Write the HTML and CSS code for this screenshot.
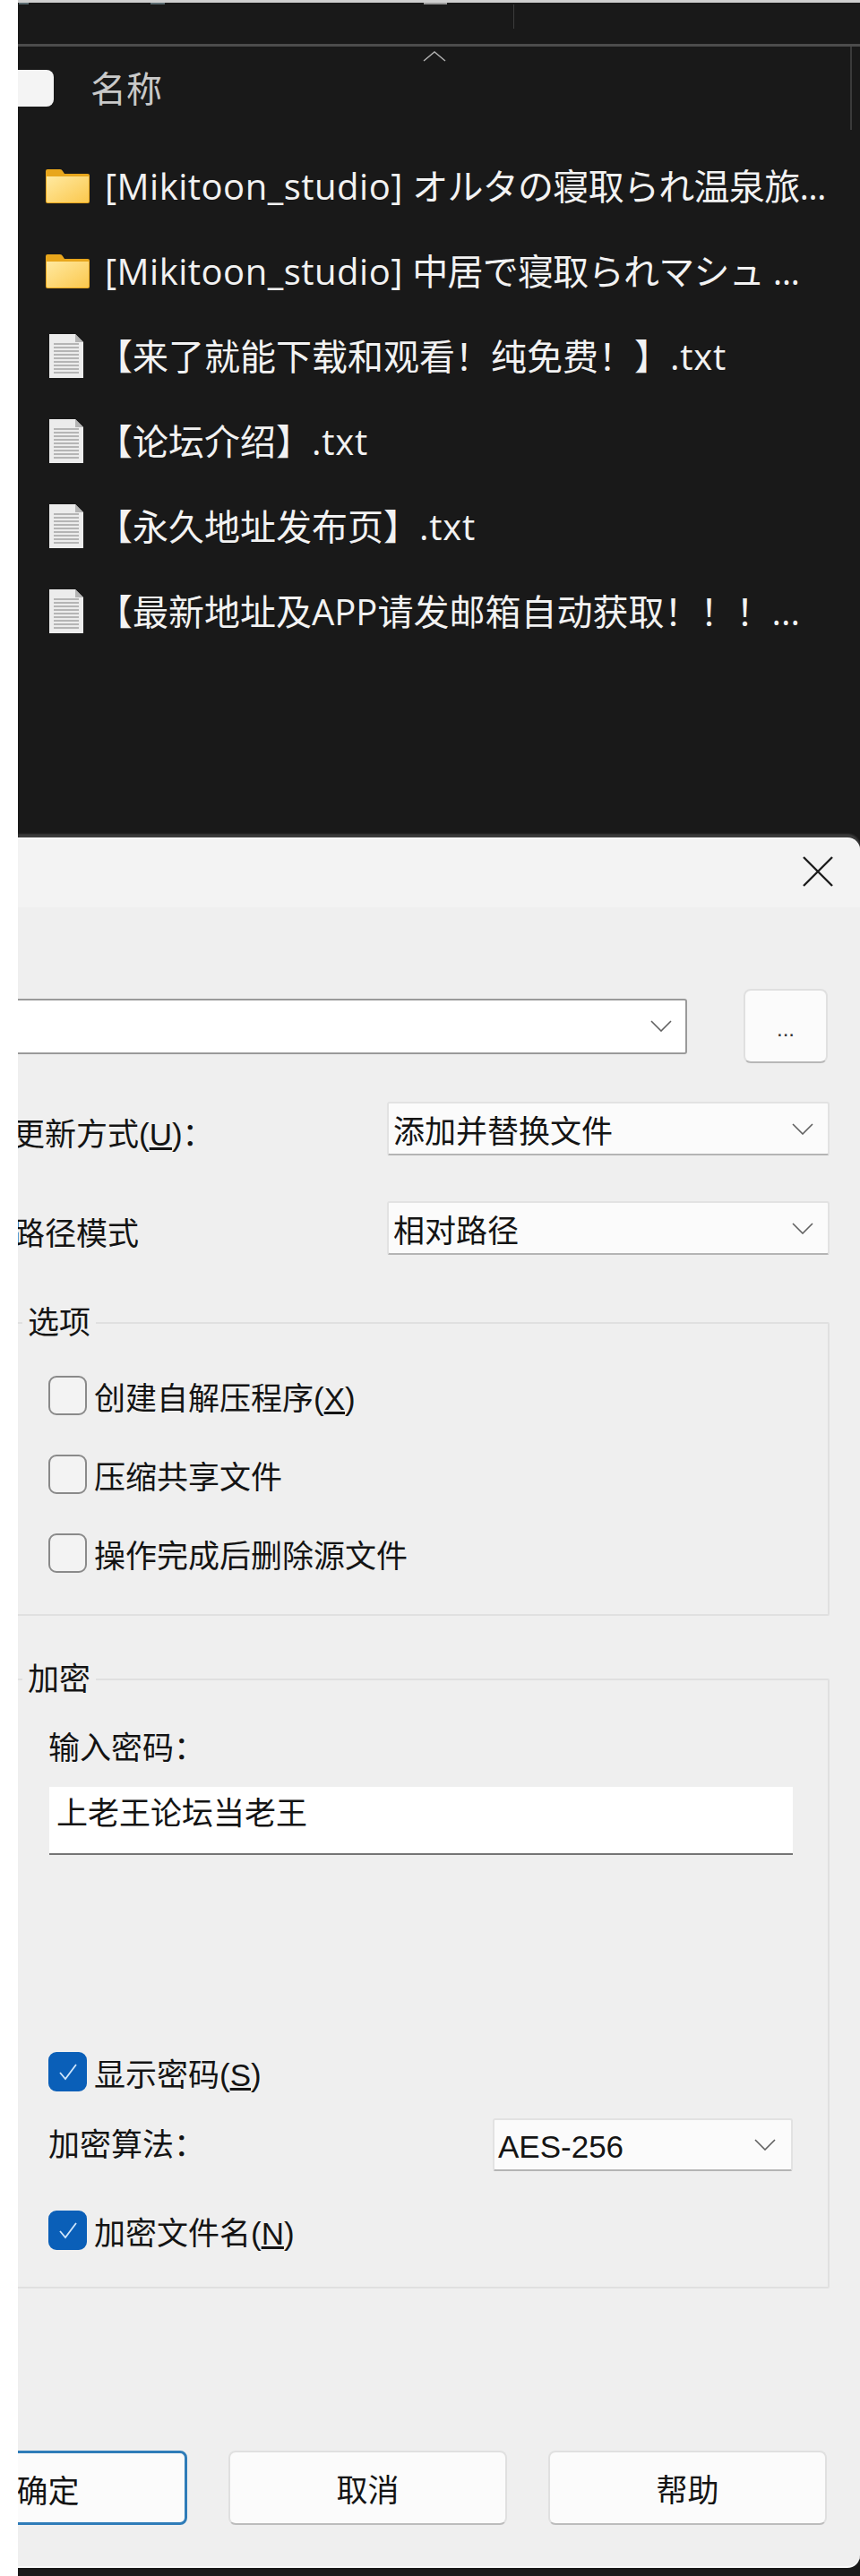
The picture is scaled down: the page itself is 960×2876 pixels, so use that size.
FILE: index.html
```html
<!DOCTYPE html>
<html lang="zh-CN">
<head>
    <meta charset="UTF-8">
    <title>压缩文件名和参数</title>
    <link rel="stylesheet" href="styles.css">
</head>
<body>
    <div class="screen">
        <!-- file explorer behind the dialog -->
        <div class="explorer">
            <div class="top-marks">
                <span class="mark mark-a"></span>
                <span class="mark mark-b"></span>
                <span class="mark mark-c"></span>
            </div>
            <div class="toolbar">
                <span class="toolbar-sep"></span>
            </div>
            <div class="list-head">
                <span class="head-check"></span>
                <span class="head-name">名称</span>
                <svg class="sort-arrow" width="26" height="12" viewBox="0 0 26 12"><polyline points="1,11 13,1 25,11"/></svg>
            </div>
            <div class="file-list">
                <div class="file-row">
                    <svg class="icon-folder" width="49" height="38" viewBox="0 0 49 38"><use href="#folder"/></svg>
                    <span class="file-name"><span class="latin">[Mikitoon_studio]</span> <span class="jp">オルタの寝取られ温泉旅...</span></span>
                </div>
                <div class="file-row">
                    <svg class="icon-folder" width="49" height="38" viewBox="0 0 49 38"><use href="#folder"/></svg>
                    <span class="file-name"><span class="latin">[Mikitoon_studio]</span> <span class="jp">中居で寝取られマシュ ...</span></span>
                </div>
                <div class="file-row">
                    <svg class="icon-doc" width="38" height="49" viewBox="0 0 38 49"><use href="#doc"/></svg>
                    <span class="file-name">【来了就能下载和观看！纯免费！】<span class="ext">.txt</span></span>
                </div>
                <div class="file-row">
                    <svg class="icon-doc" width="38" height="49" viewBox="0 0 38 49"><use href="#doc"/></svg>
                    <span class="file-name">【论坛介绍】<span class="ext">.txt</span></span>
                </div>
                <div class="file-row">
                    <svg class="icon-doc" width="38" height="49" viewBox="0 0 38 49"><use href="#doc"/></svg>
                    <span class="file-name">【永久地址发布页】<span class="ext">.txt</span></span>
                </div>
                <div class="file-row">
                    <svg class="icon-doc" width="38" height="49" viewBox="0 0 38 49"><use href="#doc"/></svg>
                    <span class="file-name">【最新地址及APP请发邮箱自动获取！！！...</span>
                </div>
            </div>
        </div>

        <!-- archive dialog -->
        <div class="dialog">
            <div class="titlebar">
                <svg width="36" height="36" viewBox="0 0 36 36"><path class="close-x" d="M2 2 L34 34 M34 2 L2 34"/></svg>
            </div>
            <div class="dialog-body">
                <div class="path-row">
                    <div class="combo">
                        <svg class="chev" width="24" height="13" viewBox="0 0 24 13"><polyline points="1,1 12,12 23,1"/></svg>
                    </div>
                    <div class="browse"><span class="browse-dots">...</span></div>
                </div>

                <div class="form-row first">
                    <span class="label label-cut">更新方式(<u>U</u>)：</span>
                    <div class="select select-wide">
                        <span>添加并替换文件</span>
                        <svg class="chev" width="24" height="13" viewBox="0 0 24 13"><polyline points="1,1 12,12 23,1"/></svg>
                    </div>
                </div>
                <div class="form-row second">
                    <span class="label label-cut">路径模式</span>
                    <div class="select select-wide">
                        <span>相对路径</span>
                        <svg class="chev" width="24" height="13" viewBox="0 0 24 13"><polyline points="1,1 12,12 23,1"/></svg>
                    </div>
                </div>

                <fieldset class="group group-options">
                    <legend>选项</legend>
                    <div class="check"><span class="box"></span><span>创建自解压程序(<u>X</u>)</span></div>
                    <div class="check"><span class="box"></span><span>压缩共享文件</span></div>
                    <div class="check"><span class="box"></span><span>操作完成后删除源文件</span></div>
                </fieldset>

                <fieldset class="group group-crypt">
                    <legend>加密</legend>
                    <div class="pw-label">输入密码：</div>
                    <div class="pw-input">上老王论坛当老王</div>
                    <div class="check show-pw">
                        <span class="box on"><svg width="22" height="20" viewBox="0 0 22 20"><polyline points="2,11 8,18 20,2"/></svg></span>
                        <span>显示密码(<u>S</u>)</span>
                    </div>
                    <div class="algo-row">
                        <span class="label">加密算法：</span>
                        <div class="select select-algo">
                            <span>AES-256</span>
                            <svg class="chev" width="24" height="13" viewBox="0 0 24 13"><polyline points="1,1 12,12 23,1"/></svg>
                        </div>
                    </div>
                    <div class="check enc-names">
                        <span class="box on"><svg width="22" height="20" viewBox="0 0 22 20"><polyline points="2,11 8,18 20,2"/></svg></span>
                        <span>加密文件名(<u>N</u>)</span>
                    </div>
                </fieldset>

                <div class="buttons">
                    <div class="btn btn-ok">确定</div>
                    <div class="btn">取消</div>
                    <div class="btn">帮助</div>
                </div>
            </div>
        </div>
    </div>

    <!-- shared icon shapes -->
    <svg class="defs" width="0" height="0">
        <defs>
            <linearGradient id="folderFill" x1="0" y1="0" x2="1" y2="1">
                <stop offset="0" stop-color="#ffe9a0"/>
                <stop offset="1" stop-color="#fbc84e"/>
            </linearGradient>
            <g id="folder">
                <path d="M2 0 H16 Q18 0 19 2 L21 5 H47 Q49 5 49 7 V36 Q49 38 47 38 H2 Q0 38 0 36 V2 Q0 0 2 0 Z" fill="#e8a61c"/>
                <path d="M1 8 H48 V36 Q48 37 47 37 H2 Q1 37 1 36 Z" fill="url(#folderFill)"/>
            </g>
            <g id="doc">
                <path d="M0 0 H29 L38 9 V49 H0 Z" fill="#ececec"/>
                <path d="M29 0 L38 9 H29 Z" fill="#b4b4b4"/>
                <path d="M5 11 H33 M5 15 H33 M5 19 H33 M5 23 H33 M5 27 H33 M5 31 H33 M5 35 H33 M5 39 H33 M5 43 H33" stroke="#a2a2a2" stroke-width="1.6"/>
            </g>
        </defs>
    </svg>
</body>
</html>
```

FILE: styles.css
```css
/* reset */
*{
    margin: 0;
    padding: 0;
    box-sizing: border-box;
}
html,body{
    height: 100%;
}
body{
    background-color: #fff;
    font-family: "Liberation Sans", "Noto Sans CJK SC", sans-serif;
    font-size: 35px;
    color: #141414;
}
.defs{
    position: absolute;
}
.screen{
    margin-left: 20px;
    height: 2876px;
    overflow: hidden;
    background-color: #191919;
    border-top: 3px solid #cfcfcf;
}

/* explorer */
.explorer{
    height: 932px;
    color: #f2f2f2;
    font-family: "Open Sans", "Noto Sans CJK SC", sans-serif;
}
.top-marks{
    display: flex;
    height: 2px;
}
.mark{
    display: block;
    height: 2px;
    background-color: #5a6a70;
}
.mark-a{
    width: 11px;
    margin-left: 1px;
}
.mark-b{
    width: 16px;
    margin-left: 136px;
}
.mark-c{
    width: 26px;
    margin-left: 289px;
    background-color: #9a9a9a;
}
.toolbar{
    height: 47px;
    border-bottom: 3px solid #4c4c4c;
    padding-left: 553px;
}
.toolbar-sep{
    display: block;
    width: 1px;
    height: 27px;
    background-color: #3c3c3c;
}
.list-head{
    position: relative;
    width: 931px;
    height: 93px;
    display: flex;
    align-items: center;
    border-right: 2px solid #3a3a3a;
}
.head-check{
    width: 40px;
    height: 41px;
    background-color: #f4f4f4;
    border-radius: 0 8px 8px 0;
}
.head-name{
    margin-left: 41px;
    font-size: 40px;
    line-height: 48px;
    color: #c9c9c9;
}
.sort-arrow{
    position: absolute;
    left: 452px;
    top: 5px;
}
.sort-arrow polyline{
    fill: none;
    stroke: #b0b0b0;
    stroke-width: 1.5;
}
.file-list{
    margin-top: 15px;
}
.file-row{
    height: 95px;
    display: flex;
    align-items: center;
    padding-left: 31px;
}
.icon-doc{
    margin-left: 4px;
    margin-right: -2px;
}
.file-name{
    margin-left: 17px;
    font-size: 40px;
    line-height: 50px;
    white-space: nowrap;
}
.latin{
    letter-spacing: .5px;
}
.jp{
    letter-spacing: -.7px;
}
.ext{
    letter-spacing: .8px;
}

/* dialog */
.dialog{
    background-color: #efefef;
    border-top: 2px solid #fafafa;
    border-bottom: 2px solid #fafafa;
    border-radius: 0 14px 14px 0;
    box-shadow: 0 -4px 2px #3c3c3c;
    height: 1932px;
    overflow: hidden;
}
.titlebar{
    height: 76px;
    background-color: #f3f3f3;
    display: flex;
    justify-content: flex-end;
    padding: 18px 29px 0 0;
}
.close-x{
    fill: none;
    stroke: #1c1c1c;
    stroke-width: 2.4;
}
.dialog-body{
    padding: 91px 34px 0 0;
}
.chev{
    flex-shrink: 0;
}
.chev polyline{
    fill: none;
    stroke: #606060;
    stroke-width: 1.6;
}
.path-row{
    height: 83px;
    display: flex;
    align-items: center;
    gap: 63px;
    padding-right: 2px;
}
.combo{
    flex: 1;
    height: 62px;
    margin-left: -10px;
    background-color: #fff;
    border: 2px solid #9a9a9a;
    border-radius: 3px;
    display: flex;
    align-items: center;
    justify-content: flex-end;
    padding-right: 15px;
}
.browse{
    width: 94px;
    height: 83px;
    background-color: #fbfbfb;
    border: 2px solid #e0e0e0;
    border-bottom-color: #b8b8b8;
    border-radius: 8px;
    text-align: center;
}
.browse-dots{
    display: block;
    margin-top: 28px;
    font-size: 24px;
    line-height: 30px;
    color: #333;
}
.form-row{
    height: 60px;
    display: flex;
    align-items: center;
    justify-content: space-between;
}
.form-row.first{
    margin-top: 43px;
}
.form-row.second{
    margin-top: 51px;
}
.label{
    line-height: 42px;
    white-space: nowrap;
}
.label-cut{
    margin-left: -5px;
    margin-top: 13px;
}
.select{
    height: 60px;
    background-color: #fbfbfb;
    border: 2px solid #e2e2e2;
    border-bottom-color: #b4b4b4;
    border-radius: 3px;
    display: flex;
    align-items: center;
    justify-content: space-between;
    white-space: nowrap;
}
.select-wide{
    width: 494px;
    padding: 0 16px 0 5px;
}
.select-algo{
    width: 335px;
    height: 59px;
    padding: 5px 17px 0 4px;
}
.select-algo .chev{
    margin-top: -5px;
}

/* group boxes */
.group{
    margin-left: -10px;
    border: 2px solid #e0e0e0;
    border-radius: 2px;
}
.group legend{
    margin-left: -29px;
    padding: 0 6px;
    line-height: 36px;
}
.group-options{
    margin-top: 58px;
    padding: 41px 0 46px 42px;
}
.group-crypt{
    margin-top: 53px;
    padding: 40px 39px 41px 42px;
}
.check{
    display: flex;
    align-items: center;
    height: 44px;
    white-space: nowrap;
}
.group-options .check + .check{
    margin-top: 44px;
}
.box{
    width: 43px;
    height: 44px;
    margin-right: 8px;
    background-color: #f3f3f3;
    border: 2px solid #8a8a8a;
    border-radius: 9px;
    flex-shrink: 0;
}
.box.on{
    background-color: #0a5fb8;
    border-color: #0a5fb8;
    display: flex;
    align-items: center;
    justify-content: center;
}
.box.on polyline{
    fill: none;
    stroke: #cfe6fb;
    stroke-width: 1.8;
}
.pw-label{
    line-height: 38px;
}
.pw-input{
    height: 76px;
    margin-top: 24px;
    margin-left: 1px;
    background-color: #fff;
    border-bottom: 2px solid #757575;
    padding: 9px 0 0 8px;
    line-height: 42px;
}
.show-pw{
    margin-top: 220px;
}
.algo-row{
    margin-top: 30px;
    height: 59px;
    display: flex;
    align-items: center;
    justify-content: space-between;
}
.enc-names{
    margin-top: 44px;
}

/* bottom buttons */
.buttons{
    margin-top: 181px;
    padding-right: 3px;
    display: flex;
    justify-content: flex-end;
    gap: 46px;
}
.btn{
    width: 311px;
    height: 83px;
    flex-shrink: 0;
    background-color: #fbfbfb;
    border: 2px solid #e0e0e0;
    border-bottom-color: #bcbcbc;
    border-radius: 8px;
    text-align: center;
    line-height: 86px;
}
.btn-ok{
    border: 3px solid #2f7cb8;
}
```
